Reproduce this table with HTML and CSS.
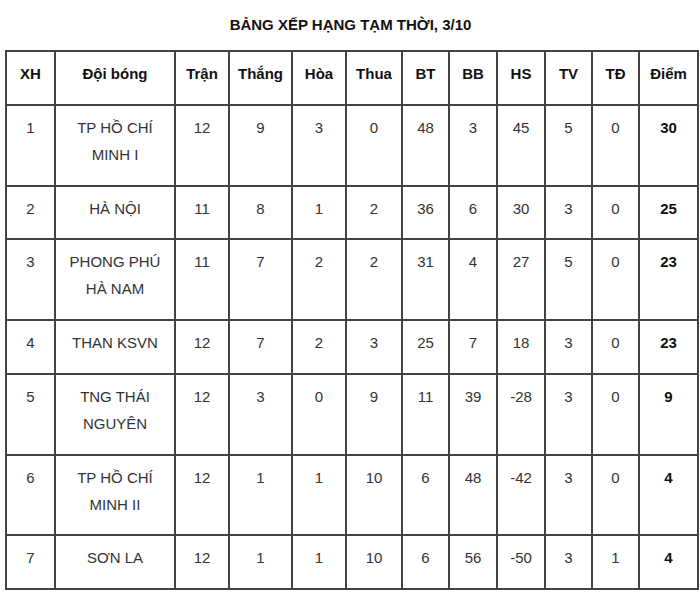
FILE: index.html
```html
<!DOCTYPE html>
<html lang="vi">
<head>
<meta charset="utf-8">
<link rel="stylesheet" href="styles.css">
</head>
<body>
<div class="wrap">
  <h2 class="title">BẢNG XẾP HẠNG TẠM THỜI, 3/10</h2>
  <table class="standings">
    <colgroup>
      <col class="c-xh"><col class="c-team"><col class="c-tran"><col class="c-thang"><col class="c-hoa"><col class="c-thua"><col class="c-bt"><col class="c-bb"><col class="c-hs"><col class="c-tv"><col class="c-td"><col class="c-diem">
    </colgroup>
    <thead>
      <tr><th>XH</th><th>Đội bóng</th><th>Trận</th><th>Thắng</th><th>Hòa</th><th>Thua</th><th>BT</th><th>BB</th><th>HS</th><th>TV</th><th>TĐ</th><th>Điểm</th></tr>
    </thead>
    <tbody>
      <tr><td>1</td><td>TP HỒ CHÍ MINH I</td><td>12</td><td>9</td><td>3</td><td>0</td><td>48</td><td>3</td><td>45</td><td>5</td><td>0</td><td class="pts">30</td></tr>
      <tr><td>2</td><td>HÀ NỘI</td><td>11</td><td>8</td><td>1</td><td>2</td><td>36</td><td>6</td><td>30</td><td>3</td><td>0</td><td class="pts">25</td></tr>
      <tr><td>3</td><td>PHONG PHÚ HÀ NAM</td><td>11</td><td>7</td><td>2</td><td>2</td><td>31</td><td>4</td><td>27</td><td>5</td><td>0</td><td class="pts">23</td></tr>
      <tr><td>4</td><td>THAN KSVN</td><td>12</td><td>7</td><td>2</td><td>3</td><td>25</td><td>7</td><td>18</td><td>3</td><td>0</td><td class="pts">23</td></tr>
      <tr><td>5</td><td>TNG THÁI NGUYÊN</td><td>12</td><td>3</td><td>0</td><td>9</td><td>11</td><td>39</td><td>-28</td><td>3</td><td>0</td><td class="pts">9</td></tr>
      <tr><td>6</td><td>TP HỒ CHÍ MINH II</td><td>12</td><td>1</td><td>1</td><td>10</td><td>6</td><td>48</td><td>-42</td><td>3</td><td>0</td><td class="pts">4</td></tr>
      <tr><td>7</td><td>SƠN LA</td><td>12</td><td>1</td><td>1</td><td>10</td><td>6</td><td>56</td><td>-50</td><td>3</td><td>1</td><td class="pts">4</td></tr>
    </tbody>
  </table>
</div>
</body>
</html>
```

FILE: styles.css
```css
html, body {
  margin: 0;
  padding: 0;
  background: #ffffff;
}

body {
  font-family: "Liberation Sans", Arial, sans-serif;
  color: #333333;
}

.wrap {
  padding: 0 4px 0 5px;
}

.title {
  margin: 0;
  padding-top: 15px;
  height: 50px;
  box-sizing: border-box;
  line-height: 20px;
  font-size: 15px;
  font-weight: bold;
  color: #111111;
  text-align: center;
}

.standings {
  width: 692px;
  table-layout: fixed;
  border-collapse: collapse;
  border: 2px solid #444444;
  font-size: 15px;
}

.standings th,
.standings td {
  border: 2px solid #444444;
  text-align: center;
  vertical-align: top;
  line-height: 27px;
  padding: 8px 5px 16.75px;
}

.standings th {
  font-weight: bold;
  color: #111111;
}

.standings .pts {
  font-weight: bold;
  color: #111111;
}

.c-xh { width: 49px; }
.c-team { width: 120px; }
.c-tran { width: 54px; }
.c-thang { width: 63px; }
.c-hoa { width: 54px; }
.c-thua { width: 56px; }
.c-bt { width: 47px; }
.c-bb { width: 48px; }
.c-hs { width: 48px; }
.c-tv { width: 47px; }
.c-td { width: 47px; }
.c-diem { width: 59px; }
```
